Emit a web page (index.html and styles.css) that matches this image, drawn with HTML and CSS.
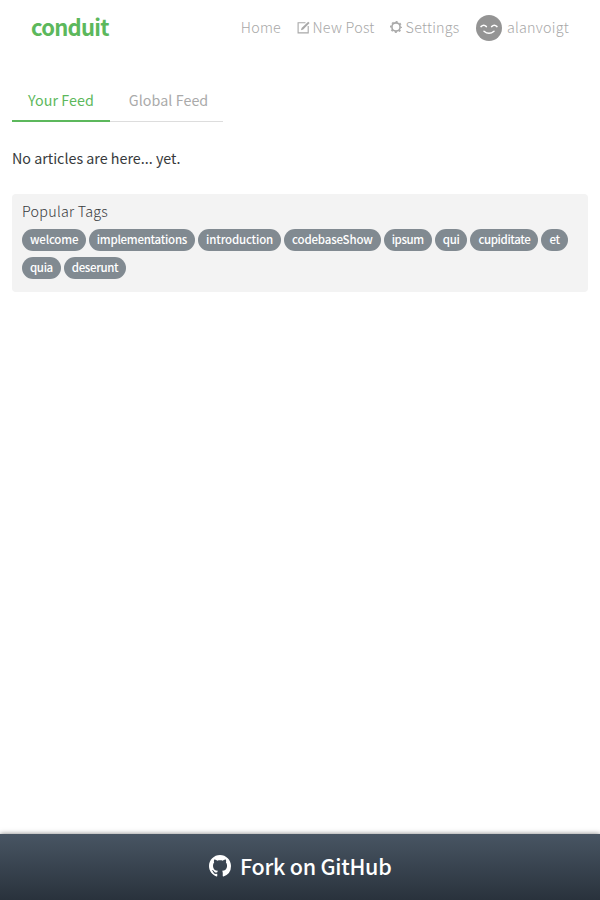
FILE: index.html
```html
<!DOCTYPE html>
<html lang="en">
<head>
<meta charset="utf-8">
<title>Conduit</title>
<link rel="stylesheet" href="styles.css">
</head>
<body>
<nav class="navbar">
  <a class="brand">conduit</a>
  <ul class="nav">
    <li>Home</li>
    <li><svg class="icon compose" viewBox="0 0 13 13"><path d="M8.5 1.8H1.1v10.1h10.1V5" fill="none" stroke="currentColor" stroke-width="1.1"/><path d="M11.2.7l1.4 1.4-6.4 6.4-2.3.8.7-2.4z" fill="currentColor"/></svg>New Post</li>
    <li><svg class="icon gear" viewBox="0 0 12 12"><circle cx="6" cy="6" r="4.1" fill="none" stroke="currentColor" stroke-width="1.6"/><circle cx="6" cy="6" r="5.3" fill="none" stroke="currentColor" stroke-width="1.4" stroke-dasharray="2 2.163" stroke-dashoffset="1"/></svg>Settings</li>
    <li class="user"><svg class="avatar" viewBox="0 0 26 26"><circle cx="13" cy="13" r="13" fill="#949494"/><path d="M5 11.6q2.7-2.6 5.4 0M15.6 11.6q2.7-2.6 5.4 0M8 16.2q5 4.2 10 0" fill="none" stroke="#fff" stroke-width="1.5" stroke-linecap="round"/></svg>alanvoigt</li>
  </ul>
</nav>
<main class="container">
  <div class="tabs"><a class="tab active">Your Feed</a><a class="tab">Global Feed</a></div>
  <p class="empty">No articles are here... yet.</p>
  <aside class="sidebar">
    <p class="title">Popular Tags</p>
    <div class="tags"><a class="wide">welcome</a><a class="long">implementations</a><a class="wide">introduction</a><a class="wide">codebaseShow</a><a>ipsum</a><a>qui</a><a>cupiditate</a><a>et</a><a>quia</a><a>deserunt</a></div>
  </aside>
</main>
<footer class="fork"><svg class="github" viewBox="0 0 16 16"><path fill="currentColor" d="M8 0C3.58 0 0 3.58 0 8c0 3.54 2.29 6.53 5.47 7.59.4.07.55-.17.55-.38 0-.19-.01-.82-.01-1.49-2.01.37-2.53-.49-2.69-.94-.09-.23-.48-.94-.82-1.13-.28-.15-.68-.52-.01-.53.63-.01 1.08.58 1.23.82.72 1.21 1.87.87 2.33.66.07-.52.28-.87.51-1.07-1.78-.2-3.64-.89-3.64-3.95 0-.87.31-1.59.82-2.15-.08-.2-.36-1.02.08-2.12 0 0 .67-.21 2.2.82.64-.18 1.32-.27 2-.27s1.36.09 2 .27c1.53-1.04 2.2-.82 2.2-.82.44 1.1.16 1.92.08 2.12.51.56.82 1.27.82 2.15 0 3.07-1.87 3.75-3.65 3.95.29.25.54.73.54 1.48 0 1.07-.01 1.93-.01 2.2 0 .21.15.46.55.38A8.01 8.01 0 0 0 16 8c0-4.42-3.58-8-8-8z"/></svg><span>Fork on GitHub</span></footer>
</body>
</html>
```
FILE: styles.css
```css
* { box-sizing: border-box; }
body {
  margin: 0;
  min-height: 900px;
  display: flex;
  flex-direction: column;
  background: #fff;
  color: #373a3c;
  font: 300 14.3px/24px "Noto Sans CJK SC", sans-serif;
}
.navbar {
  height: 56px;
  padding: 0 31px;
  display: flex;
  align-items: center;
  justify-content: space-between;
}
.brand {
  padding-bottom: 5px;
  color: #5cb85c;
  font-weight: 700;
  font-size: 22px;
  letter-spacing: -.75px;
}
.nav {
  margin: 0;
  padding: 0;
  list-style: none;
  display: flex;
  gap: 15.5px;
  color: #a8a8a8;
  letter-spacing: .25px;
}
.nav li { display: flex; align-items: center; height: 26px; line-height: 22px; padding-bottom: 2px; }
.icon { margin-right: 3px; }
.compose { width: 13px; height: 13px; }
.gear { width: 12px; height: 12px; margin-right: 3.5px; }
.nav .user { margin-left: .8px; padding-bottom: 0; line-height: 24px; align-items: flex-start; }
.avatar { width: 26px; height: 26px; margin-right: 5px; }
.container { padding: 24px 12px 0; flex: 1; }
.tabs { display: flex; height: 42px; }
.tab {
  padding: 8px 15px 0 19px;
  border-bottom: 1px solid #ddd;
  color: #aaa;
  font-weight: 400;
  letter-spacing: .05px;
}
.tab.active { padding: 8px 16px 0; border-bottom: 2px solid #5cb85c; color: #5cb85c; }
.empty { margin: 24px 0; font-weight: 400; }
.sidebar { height: 98px; padding: 5px 10px; background: #f3f3f3; border-radius: 4px; }
.title { margin: 0 0 6px; letter-spacing: .25px; }
.tags { display: flex; flex-wrap: wrap; gap: 6px 3px; }
.tags a {
  height: 22px;
  padding: 0 8px;
  border-radius: 11px;
  background: #818a91;
  color: #fff;
  font-size: 11.5px;
  font-weight: 500;
  line-height: 21px;
  letter-spacing: -.37px;
}
.tags .wide { letter-spacing: -.17px; }
.tags .long { padding: 0 8px 0 7.5px; letter-spacing: -.26px; }
.fork {
  height: 66px;
  padding-bottom: 2px;
  display: flex;
  align-items: center;
  justify-content: center;
  gap: 9.5px;
  background: linear-gradient(#485563, #29323c);
  box-shadow: 0 0 5px rgba(0, 0, 0, .5);
  color: #fff;
  font-size: 21.5px;
  font-weight: 500;
  letter-spacing: -.26px;
}
.github { width: 22px; height: 22px; }
```
